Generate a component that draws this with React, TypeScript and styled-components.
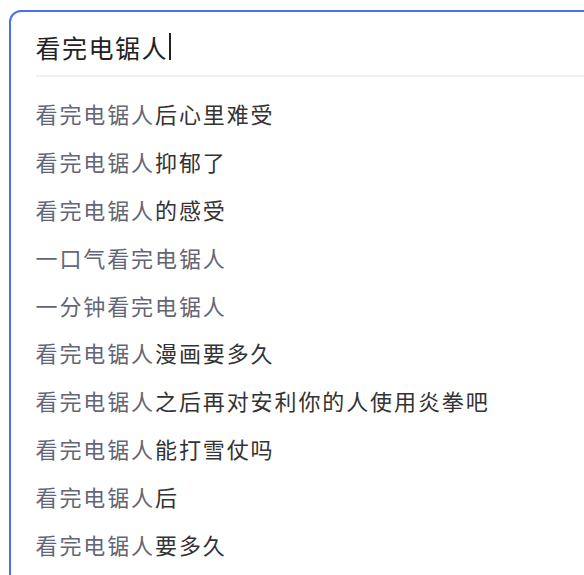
import React from 'react';
import styled, { createGlobalStyle } from 'styled-components';

const GlobalStyle = createGlobalStyle`
  html, body {
    margin: 0;
    padding: 0;
    background: #fff;
    overflow: hidden;
  }
  body {
    font-family: "Noto Sans CJK SC", "Noto Sans", sans-serif;
  }
`;

const SearchBox = styled.div`
  margin: 10px 0 0 9px;
  width: 640px;
  height: 620px;
  border: 2.5px solid #4e6ef2;
  border-radius: 12px;
  box-sizing: border-box;
  background: #fff;
  padding-left: 24.5px;
`;

const InputRow = styled.div`
  display: flex;
  align-items: center;
  height: 36px;
  padding: 16.5px 0 10px;
  border-bottom: 2px solid #f0f0f2;
`;

const InputText = styled.span`
  font-size: 25px;
  line-height: 36px;
  color: #222;
  letter-spacing: 1.5px;
`;

const Caret = styled.span`
  display: inline-block;
  width: 1.5px;
  height: 27px;
  margin-left: 1px;
  background: #222;
`;

const SuggestionList = styled.ul`
  list-style: none;
  margin: 0;
  padding: 13px 0 0;
`;

const Suggestion = styled.li`
  height: 47.8px;
  display: flex;
  align-items: center;
  font-size: 22px;
  letter-spacing: 1.9px;
  white-space: nowrap;
`;

const Match = styled.span`
  color: #626675;
`;

const Rest = styled.span`
  color: #333;
`;

const query = '看完电锯人';

const suggestions = [
  '看完电锯人后心里难受',
  '看完电锯人抑郁了',
  '看完电锯人的感受',
  '一口气看完电锯人',
  '一分钟看完电锯人',
  '看完电锯人漫画要多久',
  '看完电锯人之后再对安利你的人使用炎拳吧',
  '看完电锯人能打雪仗吗',
  '看完电锯人后',
  '看完电锯人要多久',
];

function SuggestionText({ text }: { text: string }) {
  if (text.startsWith(query)) {
    return (
      <>
        <Match>{query}</Match>
        <Rest>{text.slice(query.length)}</Rest>
      </>
    );
  }
  return <Match>{text}</Match>;
}

function App() {
  return (
    <>
      <GlobalStyle />
      <SearchBox>
        <InputRow>
          <InputText>{query}</InputText>
          <Caret />
        </InputRow>
        <SuggestionList>
          {suggestions.map((s) => (
            <Suggestion key={s}>
              <SuggestionText text={s} />
            </Suggestion>
          ))}
        </SuggestionList>
      </SearchBox>
    </>
  );
}

export default App;
